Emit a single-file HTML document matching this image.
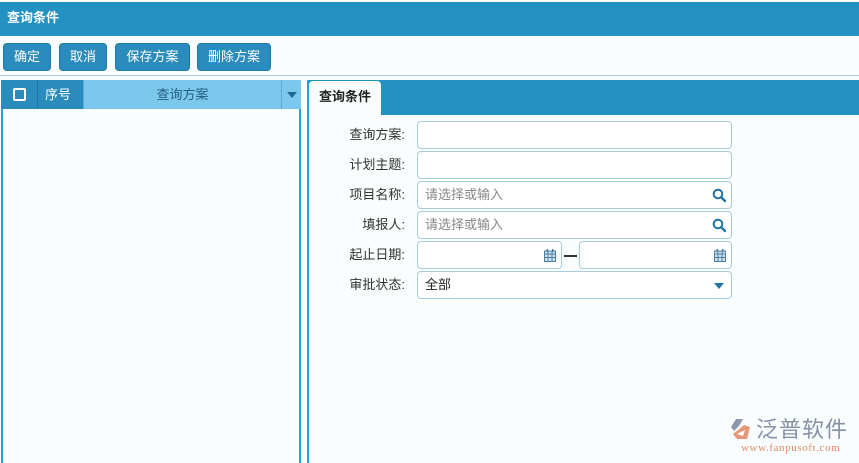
<!DOCTYPE html>
<html><head><meta charset="utf-8"><style>
*{box-sizing:border-box;margin:0;padding:0}
html{width:859px;height:463px;overflow:hidden}
body{width:859px;height:463px;background:#fafdfd;font-family:"Liberation Sans","Noto Sans CJK SC",sans-serif;font-size:13px;position:relative;overflow:hidden;color:#333}
.hdr{position:absolute;left:0;top:2px;width:859px;height:34px;background:#2391c1;color:#fff;font-weight:bold;font-size:13px;line-height:32px;padding-left:7px}
.btn{position:absolute;top:43px;height:28px;background:#2a8cbd;border:1px solid #1d77a3;border-radius:4px;color:#fff;font-size:13px;line-height:26px;text-align:center}
.sep{position:absolute;left:0;top:75px;width:859px;height:1px;background:#a9cfe3}
.lp{position:absolute;left:1px;top:80px;width:300px;height:383px;border-left:2px solid #1fa3d8;border-right:2px solid #1fa3d8;background:#fafdfd}
.gh{position:absolute;left:1px;top:80px;width:300px;height:29px;background:#2a8cbd;color:#fff}
.rp{position:absolute;left:307px;top:80px;width:552px;height:383px;border-left:2px solid #1fa3d8;background:#fafdfd}
.tabbar{position:absolute;left:309px;top:80px;width:550px;height:35px;background:#2391c1}
.tab{position:absolute;left:309px;top:81px;width:72px;height:35px;background:#fafdfd;border-radius:4px 4px 0 0;font-weight:bold;color:#222;line-height:32px;text-align:center}
.lbl{position:absolute;left:300px;width:105px;text-align:right;color:#333;font-size:13px}
.inp{position:absolute;left:417px;width:315px;height:28px;border:1px solid #a9cbe0;border-radius:4px;background:#fff;color:#888;line-height:26px;padding-left:7px;font-size:13px}
</style></head><body>
<div class="hdr">查询条件</div>
<div class="btn" style="left:3px;width:48px">确定</div>
<div class="btn" style="left:59px;width:48px">取消</div>
<div class="btn" style="left:115px;width:75px">保存方案</div>
<div class="btn" style="left:197px;width:74px">删除方案</div>
<div class="sep"></div>
<div class="lp"></div>
<div class="gh">
 <div style="position:absolute;left:12px;top:8px;width:13px;height:13px;border:2px solid #fff;border-radius:2px"></div>
 <div style="position:absolute;left:36px;top:0;width:1px;height:29px;background:#1d77a3"></div>
 <div style="position:absolute;left:44px;top:0;line-height:29px">序号</div>
 <div style="position:absolute;left:82px;top:0;width:198px;height:29px;background:#7cc8ec;color:#235e85;text-align:center;line-height:29px;border-left:1px solid #5aa9d0">查询方案</div>
 <div style="position:absolute;left:280px;top:0;width:20px;height:29px;background:#7cc8ec;border-left:1px solid #5aa9d0"><div style="position:absolute;left:5px;top:12px;border-left:5px solid transparent;border-right:5px solid transparent;border-top:6px solid #1f6b96"></div></div>
</div>
<div class="rp"></div>
<div class="tabbar"></div>
<div class="tab">查询条件</div>

<div class="lbl" style="top:124px">查询方案:</div><div class="inp" style="top:121px"></div>
<div class="lbl" style="top:154px">计划主题:</div><div class="inp" style="top:151px"></div>
<div class="lbl" style="top:184px">项目名称:</div><div class="inp" style="top:181px">请选择或输入
 <svg style="position:absolute;right:4px;top:6px" width="15" height="15" viewBox="0 0 15 15"><circle cx="6" cy="6" r="4.3" fill="none" stroke="#1f73a6" stroke-width="2"/><path d="M9.2 9.2L13 13" stroke="#1f73a6" stroke-width="2.4" stroke-linecap="round"/></svg></div>
<div class="lbl" style="top:214px">填报人:</div><div class="inp" style="top:211px">请选择或输入
 <svg style="position:absolute;right:4px;top:6px" width="15" height="15" viewBox="0 0 15 15"><circle cx="6" cy="6" r="4.3" fill="none" stroke="#1f73a6" stroke-width="2"/><path d="M9.2 9.2L13 13" stroke="#1f73a6" stroke-width="2.4" stroke-linecap="round"/></svg></div>
<div class="lbl" style="top:244px">起止日期:</div>
<div class="inp" style="top:241px;width:145px"><svg style="position:absolute;right:5px;top:7px" width="12" height="13" viewBox="0 0 12 13"><rect x="0.5" y="2" width="11" height="10.5" fill="#cfe3ef" stroke="#4b7fa3"/><path d="M0.5 5H11.5M4 2V12.5M8 2V12.5M0.5 8.5H11.5" stroke="#4b7fa3"/><rect x="2.5" y="0" width="1.5" height="3" fill="#4b7fa3"/><rect x="8" y="0" width="1.5" height="3" fill="#4b7fa3"/></svg></div>
<div style="position:absolute;left:564px;top:255px;width:13px;height:1.5px;background:#333"></div>
<div class="inp" style="top:241px;left:579px;width:153px"><svg style="position:absolute;right:5px;top:7px" width="12" height="13" viewBox="0 0 12 13"><rect x="0.5" y="2" width="11" height="10.5" fill="#cfe3ef" stroke="#4b7fa3"/><path d="M0.5 5H11.5M4 2V12.5M8 2V12.5M0.5 8.5H11.5" stroke="#4b7fa3"/><rect x="2.5" y="0" width="1.5" height="3" fill="#4b7fa3"/><rect x="8" y="0" width="1.5" height="3" fill="#4b7fa3"/></svg></div>
<div class="lbl" style="top:274px">审批状态:</div><div class="inp" style="top:271px;color:#222">全部<div style="position:absolute;right:7px;top:11px;border-left:5px solid transparent;border-right:5px solid transparent;border-top:6px solid #1f73a6"></div></div>

<div style="position:absolute;left:730px;top:417px;width:24px;height:24px">
<svg width="24" height="24" viewBox="0 0 24 24"><path d="M6 2L13 2L9 9L4 14L1 10Z" fill="#8c97ad"/><path d="M8 13L14 8L20 10L17 22L7 22L3 17Z" fill="#e5977a"/><path d="M7 17L15 13L13 19Z" fill="#fff"/></svg></div>
<div style="position:absolute;left:756px;top:415px;font-size:22px;color:#8790a6;letter-spacing:1px;font-family:'Noto Sans CJK SC',sans-serif;line-height:26px">泛普软件</div>
<div style="position:absolute;left:741px;top:442px;font-size:11px;color:#e08a68;font-family:'Liberation Serif',serif;letter-spacing:0.6px">www.fanpusoft.com</div>
</body></html>
